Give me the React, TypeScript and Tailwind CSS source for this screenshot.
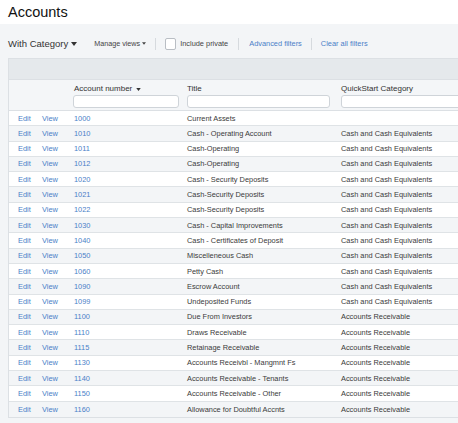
import React from 'react'

type Row = { num: string; title: string; category: string }

const rows: Row[] = [
  { num: '1000', title: 'Current Assets', category: '' },
  { num: '1010', title: 'Cash - Operating Account', category: 'Cash and Cash Equivalents' },
  { num: '1011', title: 'Cash-Operating', category: 'Cash and Cash Equivalents' },
  { num: '1012', title: 'Cash-Operating', category: 'Cash and Cash Equivalents' },
  { num: '1020', title: 'Cash - Security Deposits', category: 'Cash and Cash Equivalents' },
  { num: '1021', title: 'Cash-Security Deposits', category: 'Cash and Cash Equivalents' },
  { num: '1022', title: 'Cash-Security Deposits', category: 'Cash and Cash Equivalents' },
  { num: '1030', title: 'Cash - Capital Improvements', category: 'Cash and Cash Equivalents' },
  { num: '1040', title: 'Cash - Certificates of Deposit', category: 'Cash and Cash Equivalents' },
  { num: '1050', title: 'Miscelleneous Cash', category: 'Cash and Cash Equivalents' },
  { num: '1060', title: 'Petty Cash', category: 'Cash and Cash Equivalents' },
  { num: '1090', title: 'Escrow Account', category: 'Cash and Cash Equivalents' },
  { num: '1099', title: 'Undeposited Funds', category: 'Cash and Cash Equivalents' },
  { num: '1100', title: 'Due From Investors', category: 'Accounts Receivable' },
  { num: '1110', title: 'Draws Receivable', category: 'Accounts Receivable' },
  { num: '1115', title: 'Retainage Receivable', category: 'Accounts Receivable' },
  { num: '1130', title: 'Accounts Receivbl - Mangmnt Fs', category: 'Accounts Receivable' },
  { num: '1140', title: 'Accounts Receivable - Tenants', category: 'Accounts Receivable' },
  { num: '1150', title: 'Accounts Receivable - Other', category: 'Accounts Receivable' },
  { num: '1160', title: 'Allowance for Doubtful Accnts', category: 'Accounts Receivable' },
]

function Caret({ className = '' }: { className?: string }) {
  return (
    <svg viewBox="0 0 6 4" className={className} fill="currentColor">
      <path d="M0 0h6L3 4z" />
    </svg>
  )
}

export default function App() {
  return (
    <div className="w-[458px] h-[423px] overflow-hidden bg-[#f3f5f7] font-['Liberation_Sans',Arial,sans-serif] text-[#3a3a3a]">
      <div className="h-[24px] bg-white pl-[8px] flex items-center">
        <h1 className="text-[14.5px] leading-none text-[#111] pt-[1px]">Accounts</h1>
      </div>

      {/* toolbar */}
      <div className="h-[34px] pt-[6px] pl-[8px] flex items-center">
        <button className="flex items-center text-[9.5px] text-[#333]">
          <span>With Category</span>
          <Caret className="ml-[3px] w-[6px] h-[4px]" />
        </button>
        <button className="ml-[17px] flex items-center text-[7.2px] text-[#444]">
          <span>Manage views</span>
          <Caret className="ml-[2px] w-[4px] h-[3px]" />
        </button>
        <span className="ml-[9px] mr-[9px] h-[12px] w-px bg-[#d6dade]" />
        <label className="flex items-center text-[7.4px] text-[#444]">
          <span className="w-[11px] h-[12px] rounded-[2px] border border-[#b9bec4] bg-white" />
          <span className="ml-[4px]">Include private</span>
        </label>
        <span className="ml-[10px] mr-[10px] h-[12px] w-px bg-[#d6dade]" />
        <a className="text-[7.4px] text-[#4a7fc8]">Advanced filters</a>
        <span className="ml-[9px] mr-[9px] h-[12px] w-px bg-[#d6dade]" />
        <a className="text-[7.4px] text-[#4a7fc8]">Clear all filters</a>
      </div>

      <div className="ml-[8px] w-[480px] border border-[#dce0e4] bg-white">
        <div className="h-[21px] bg-[#e5e9ec] border-b border-[#dce0e4]" />
        <div className="h-[31px] bg-[#f4f6f8] border-b border-[#dce0e4] flex text-[8px] text-[#333]">
          <div className="w-[65px]" />
          <div className="w-[113px] pt-[4px] flex flex-col">
            <div className="h-[10px] leading-[10px] flex items-center">
              <span>Account number</span>
              <Caret className="ml-[4px] w-[5px] h-[3px]" />
            </div>
            <input className="mt-[1px] -ml-[1px] w-[106px] h-[13px] rounded-[3px] border border-[#cfd4d9] bg-white" />
          </div>
          <div className="w-[154px] pt-[4px] flex flex-col">
            <div className="h-[10px] leading-[10px]">Title</div>
            <input className="mt-[1px] w-[143px] h-[13px] rounded-[3px] border border-[#cfd4d9] bg-white" />
          </div>
          <div className="flex-1 pt-[4px] flex flex-col">
            <div className="h-[10px] leading-[10px]">QuickStart Category</div>
            <input className="mt-[1px] w-[140px] h-[13px] rounded-[3px] border border-[#cfd4d9] bg-white" />
          </div>
        </div>
        {rows.map((r, i) => (
          <div
            key={r.num}
            className={`h-[15.3px] flex items-center text-[7.4px] border-b border-[#dfe3e6] last:border-b-0 ${i % 2 === 0 ? 'bg-white' : 'bg-[#f3f5f7]'}`}
          >
            <a className="w-[33px] pl-[9px] text-[#4a7fc8]">Edit</a>
            <a className="w-[32px] text-[#4a7fc8]">View</a>
            <a className="w-[113px] text-[#4a7fc8]">{r.num}</a>
            <span className="w-[154px]">{r.title}</span>
            <span className="flex-1">{r.category}</span>
          </div>
        ))}
      </div>
    </div>
  )
}
